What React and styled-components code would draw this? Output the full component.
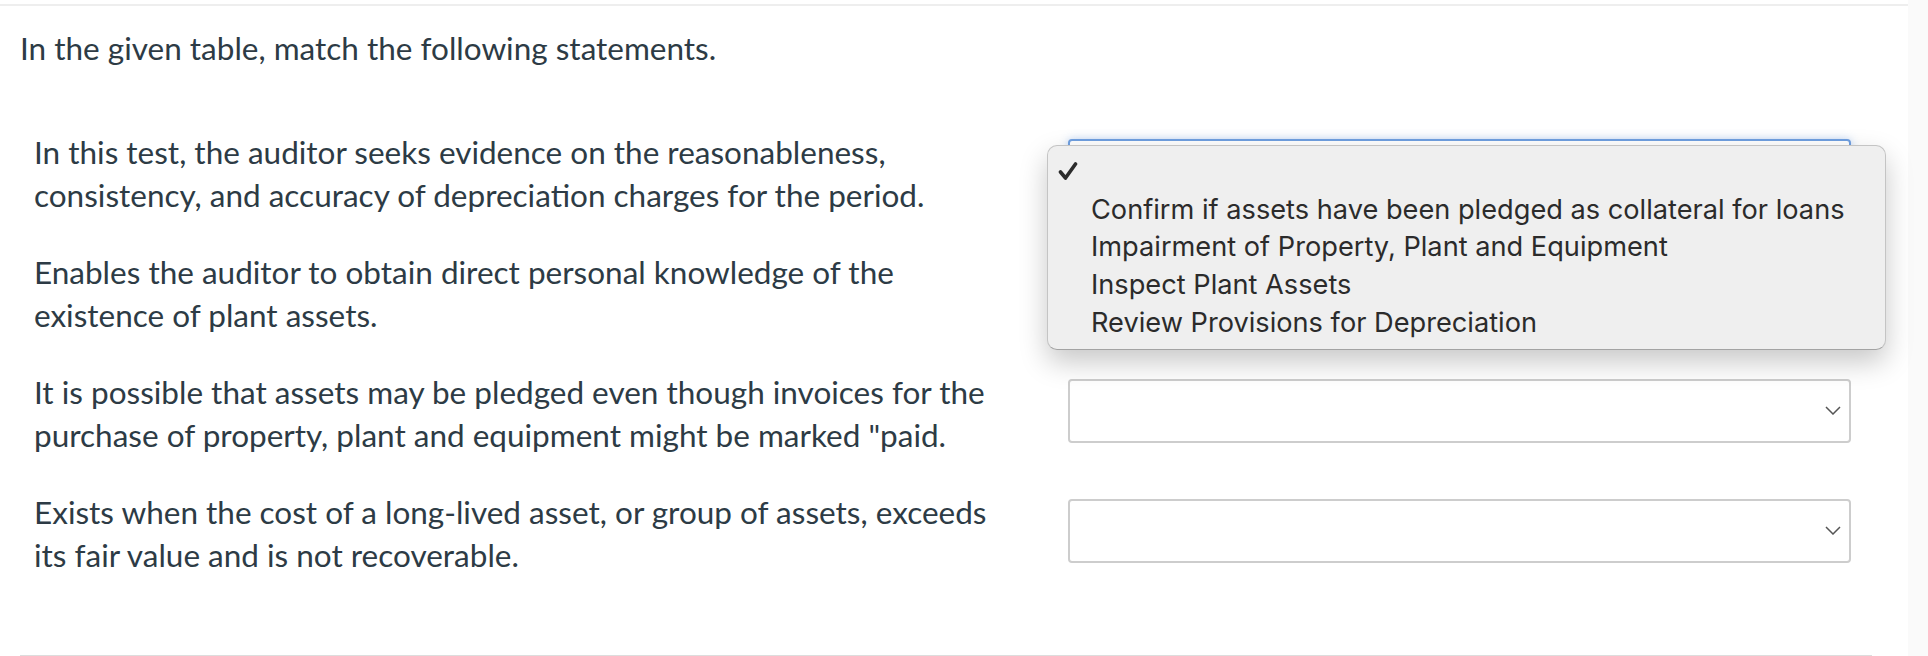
import React from "react";
import styled, { createGlobalStyle } from "styled-components";

const statements = [
  "In this test, the auditor seeks evidence on the reasonableness, consistency, and accuracy of depreciation charges for the period.",
  "Enables the auditor to obtain direct personal knowledge of the existence of plant assets.",
  'It is possible that assets may be pledged even though invoices for the purchase of property, plant and equipment might be marked "paid.',
  "Exists when the cost of a long-lived asset, or group of assets, exceeds its fair value and is not recoverable.",
];

const options = [
  "Confirm if assets have been pledged as collateral for loans",
  "Impairment of Property, Plant and Equipment",
  "Inspect Plant Assets",
  "Review Provisions for Depreciation",
];

export default function App() {
  return (
    <>
      <GlobalStyle />
      <Page>
        <Main>
          <Heading>In the given table, match the following statements.</Heading>
          <Table>
            {statements.map((text, i) => (
              <Row key={i}>
                <Statement>{text}</Statement>
                <SelectWrap>
                  <Select focused={i === 0}>
                    <Chevron width="16" height="9" viewBox="0 0 16 9">
                      <polyline points="1,1 8,8 15,1" fill="none" stroke="#555" strokeWidth="1.5" />
                    </Chevron>
                  </Select>
                  {i === 0 && (
                    <Menu>
                      <MenuItem>
                        <Check width="20" height="18" viewBox="0 0 20 18">
                          <path d="M2.5 10 L7.5 16 L17.5 2" fill="none" stroke="#2b2b2b" strokeWidth="3.6" strokeLinecap="round" strokeLinejoin="round" />
                        </Check>
                      </MenuItem>
                      {options.map((o) => (
                        <MenuItem key={o}>{o}</MenuItem>
                      ))}
                    </Menu>
                  )}
                </SelectWrap>
              </Row>
            ))}
          </Table>
          <Divider />
        </Main>
        <Side />
      </Page>
    </>
  );
}

const GlobalStyle = createGlobalStyle`
  body {
    margin: 0;
    background: #ffffff;
    font-family: "Lato", "Noto Sans", sans-serif;
  }
`;

const Page = styled.div`
  display: flex;
  width: 1928px;
  height: 656px;
  overflow: hidden;
`;

const Main = styled.div`
  flex: 1;
  margin-top: 4px;
  border-top: 2px solid #eeeeee;
`;

const Side = styled.div`
  width: 20px;
  background: #fafafa;
`;

const Heading = styled.div`
  margin: 22px 0 0 20px;
  font-size: 31.5px;
  line-height: 40.5px;
  color: #2d3b45;
`;

const Table = styled.div`
  margin: 45px 0 0 34px;
`;

const Row = styled.div`
  display: grid;
  grid-template-columns: 965px 783px;
  column-gap: 69px;
  align-items: center;
  padding: 17px 0;
`;

const Statement = styled.div`
  font-size: 31.5px;
  line-height: 43px;
  color: #2d3b45;
`;

const SelectWrap = styled.div`
  position: relative;
  margin-bottom: 6px;
`;

const Select = styled.div`
  box-sizing: border-box;
  height: 64px;
  display: flex;
  align-items: center;
  justify-content: flex-end;
  padding-right: 8px;
  background: #fff;
  border: ${(p) => (p.focused ? "2px solid #6f9fe0" : "2px solid #cdcdcd")};
  border-radius: 4px;
  box-shadow: ${(p) => (p.focused ? "0 0 8px rgba(110, 160, 230, 0.45)" : "none")};
`;

const Chevron = styled.svg`
  display: block;
`;

const Menu = styled.div`
  position: absolute;
  top: 6px;
  left: -21px;
  width: 839px;
  box-sizing: border-box;
  padding: 7px 0 8px;
  background: #efefef;
  border: 1px solid #c4c4c4;
  border-bottom-color: #a3a3a3;
  border-radius: 10px;
  box-shadow: 0 12px 28px rgba(0, 0, 0, 0.22);
  z-index: 2;
`;

const MenuItem = styled.div`
  height: 37.7px;
  display: flex;
  align-items: center;
  padding-left: 43px;
  position: relative;
  font-family: "Inter", "Liberation Sans", sans-serif;
  font-size: 27.2px;
  color: #2b2b2b;
  white-space: nowrap;
`;

const Check = styled.svg`
  position: absolute;
  left: 10px;
  top: 9px;
`;

const Divider = styled.div`
  margin: 61px 36px 0 20px;
  border-top: 3px solid #dddddd;
`;
